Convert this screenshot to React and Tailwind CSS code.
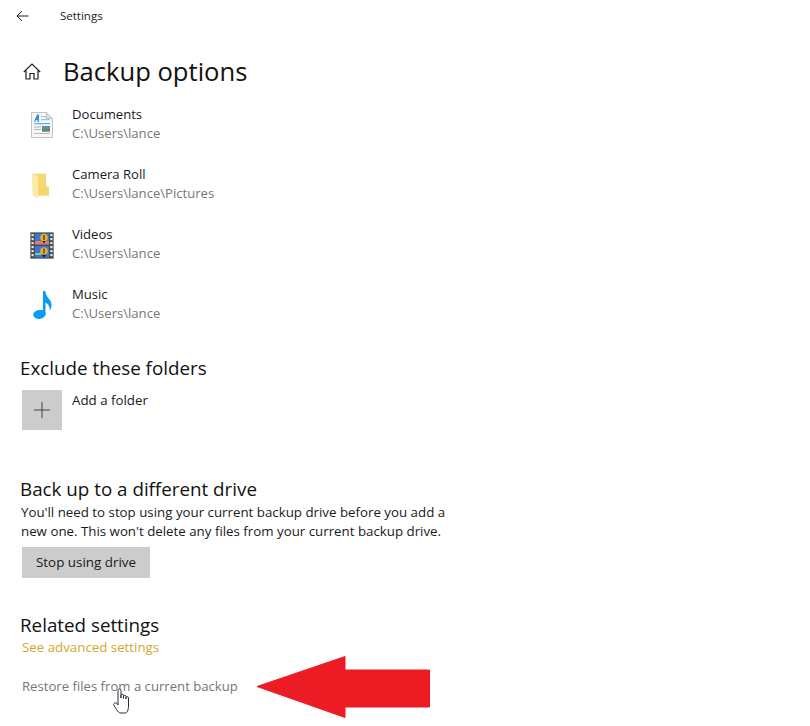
const F = "font-['Open_Sans','Noto_Sans',sans-serif]";

function DocIcon() {
  return (
    <svg width="22" height="26" viewBox="0 0 22 26">
      <path d="M0.5 0.5H15.5L21.5 6.5V25.5H0.5Z" fill="#f6f6f6" stroke="#c4c4c4" />
      <path d="M15.5 0.5V6.5H21.5Z" fill="#dcdcdc" stroke="#c4c4c4" />
      <path d="M3 10L6 2.5H8V10H6.5V8H5L4.2 10Z" fill="#2f8fe0" />
      <rect x="10" y="4" width="5" height="1.2" fill="#9cc7ea" />
      <rect x="10" y="7" width="9" height="1.2" fill="#9cc7ea" />
      <rect x="3" y="11" width="16" height="1.2" fill="#5ab2ee" />
      <rect x="3" y="14.5" width="7" height="1" fill="#b4b4b4" />
      <rect x="3" y="17" width="7" height="1" fill="#b4b4b4" />
      <rect x="11" y="14" width="8" height="5.5" fill="#5d8faa" />
      <rect x="11" y="17" width="8" height="2.5" fill="#5f8a62" />
      <rect x="3" y="21" width="16" height="1" fill="#bcbcbc" />
    </svg>
  );
}

function FolderIcon() {
  return (
    <svg className="-ml-[3px]" width="17" height="25" viewBox="0 0 17 25">
      <path d="M0 0.5H14V13.5H17V22.5H6V25L1 23Z" fill="#f8dd85" />
      <path d="M6 1.5H14V13.5H17V22.5H6Z" fill="#f6d670" />
      <path d="M0 0.5L6 3V25L1 23Z" fill="#fde9a8" />
    </svg>
  );
}

function VideoIcon() {
  return (
    <svg width="24" height="27" viewBox="0 0 24 27">
      <rect width="24" height="27" fill="#cfcfcf" />
      <rect x="0.5" y="0.5" width="23" height="26" fill="#4a4a4a" />
      {[2, 6, 10, 14, 18, 22].map((y) => (
        <g key={y}>
          <rect x="1.5" y={y} width="2.2" height="2.2" fill="#e4e4e4" />
          <rect x="20.3" y={y} width="2.2" height="2.2" fill="#e4e4e4" />
        </g>
      ))}
      <rect x="5" y="1.5" width="14" height="11" fill="#3278de" />
      <rect x="5" y="14" width="14" height="11.5" fill="#3278de" />
      <rect x="5" y="9" width="14" height="3.5" fill="#e0805f" />
      <circle cx="14" cy="5.5" r="3.8" fill="#e8b02a" />
      <rect x="13" y="3" width="2" height="5" fill="#8a5a1e" />
      <path d="M12.5 9L15.5 9L14 11.5Z" fill="#111" />
      <circle cx="14" cy="19" r="3.8" fill="#e8b02a" />
      <rect x="13" y="16.5" width="2" height="5" fill="#8a5a1e" />
      <path d="M12 23L16 23L14 25.5Z" fill="#111" />
      <rect x="5" y="21" width="6" height="2" fill="#8ccb78" />
    </svg>
  );
}

function MusicIcon() {
  return (
    <svg width="19" height="28" viewBox="0 0 19 28">
      <ellipse cx="6.5" cy="23.3" rx="6.3" ry="4.5" fill="#0a9cf5" transform="rotate(-12 6.5 23.3)" />
      <path d="M10 0H12.3C12.7 4 14.5 6 16.5 8.5C19 11.5 19.2 15.5 16.8 20C17 16 15.5 13 12.5 11.5V23H10Z" fill="#0a9cf5" />
    </svg>
  );
}

function Item({ icon, name, path }) {
  return (
    <div className="flex h-[60px]">
      <div className="flex h-[40px] w-[40px] items-center justify-center">{icon}</div>
      <div className="ml-[10px]">
        <div className="text-[13.1px] leading-[19px] text-[#1a1a1a]">{name}</div>
        <div className="text-[13.1px] leading-[19px] text-[#767676]">{path}</div>
      </div>
    </div>
  );
}

export default function App() {
  return (
    <div className={`${F} relative h-[726px] w-[810px] overflow-hidden bg-white`}>
      <div className="flex h-[32px] items-center pl-[16px]">
        <svg width="13" height="12" viewBox="0 0 13 12" fill="none" stroke="#222" strokeWidth="1">
          <path d="M12.5 6H1M6 1L1 6L6 11" />
        </svg>
        <span className="ml-[31px] text-[11.5px] text-[#222]">Settings</span>
      </div>

      <div className="mt-[19px] flex h-[40px] items-center pl-[23px]">
        <svg width="18" height="17" viewBox="0 0 18 17" fill="none" stroke="#222" strokeWidth="1.2">
          <path d="M0.8 9L9 1L17.2 9M3 7V16H7V10.5H11V16H15V7" />
        </svg>
        <span className="ml-[22px] pt-[2px] text-[25.6px] leading-[40px] text-[#111]">Backup options</span>
      </div>

      <div className="mt-[14px] pl-[22px]">
        <Item icon={<DocIcon />} name="Documents" path="C:\Users\lance" />
        <Item icon={<FolderIcon />} name="Camera Roll" path="C:\Users\lance\Pictures" />
        <Item icon={<VideoIcon />} name="Videos" path="C:\Users\lance" />
        <Item icon={<MusicIcon />} name="Music" path="C:\Users\lance" />
      </div>

      <section className="mt-[9px] pl-[21px]">
        <h2 className="-ml-[1px] text-[18.8px] leading-[28px] text-[#111]">Exclude these folders</h2>
        <div className="mt-[8px] flex pl-[1px]">
          <div className="flex h-[40px] w-[40px] items-center justify-center bg-[#cccccc]">
            <svg width="16" height="16" viewBox="0 0 16 16" stroke="#444" strokeWidth="1">
              <path d="M8 0V16M0 8H16" />
            </svg>
          </div>
          <div className="ml-[10px] text-[13.3px] leading-[20px] text-[#1a1a1a]">Add a folder</div>
        </div>
      </section>

      <section className="mt-[45px] pl-[21px]">
        <h2 className="-ml-[1px] text-[18.8px] leading-[28px] text-[#111]">Back up to a different drive</h2>
        <p className="w-[440px] text-[13.3px] leading-[19px] text-[#1a1a1a]">
          You'll need to stop using your current backup drive before you add a new one. This won't delete any files from your current backup drive.
        </p>
        <button className="mt-[6px] ml-[1px] flex h-[31px] w-[128px] items-center justify-center bg-[#cccccc] text-[13.4px] text-[#1a1a1a]">
          Stop using drive
        </button>
      </section>

      <section className="mt-[33px] pl-[21px]">
        <h2 className="-ml-[1px] text-[18.8px] leading-[28px] text-[#111]">Related settings</h2>
        <div className="-mt-[1px] pl-[1px] text-[13.3px] leading-[19px] text-[#cfa92f]">See advanced settings</div>
        <div className="mt-[20px] pl-[1px] text-[13.15px] leading-[19px] text-[#767676]">Restore files from a current backup</div>
      </section>

      <svg className="absolute left-[257px] top-[656px]" width="173" height="62" viewBox="0 0 173 62">
        <path d="M0 30.5L88 0.5V14H172.5V51H88V61.5Z" fill="#ed1c24" stroke="#ed1c24" strokeLinejoin="round" />
      </svg>

      <svg className="absolute left-[113px] top-[688px]" width="20" height="26" viewBox="0 0 20 26" fill="#fff" stroke="#2b2b3a" strokeWidth="1">
        <path d="M5 14V2.5C5 0.5 8 0.5 8 2.5V10V7.5C8 6 10.5 6 10.5 7.5V10.5V8.5C10.5 7 13 7 13 8.5V11V9.5C13 8.3 15.5 8.3 15.5 10V18C15.5 22 14 25 12.5 25H8C6 25 5 24 3.5 21.5L1 17.5C0 15.5 2 14 4 15.5L5 17Z" />
      </svg>
    </div>
  );
}
